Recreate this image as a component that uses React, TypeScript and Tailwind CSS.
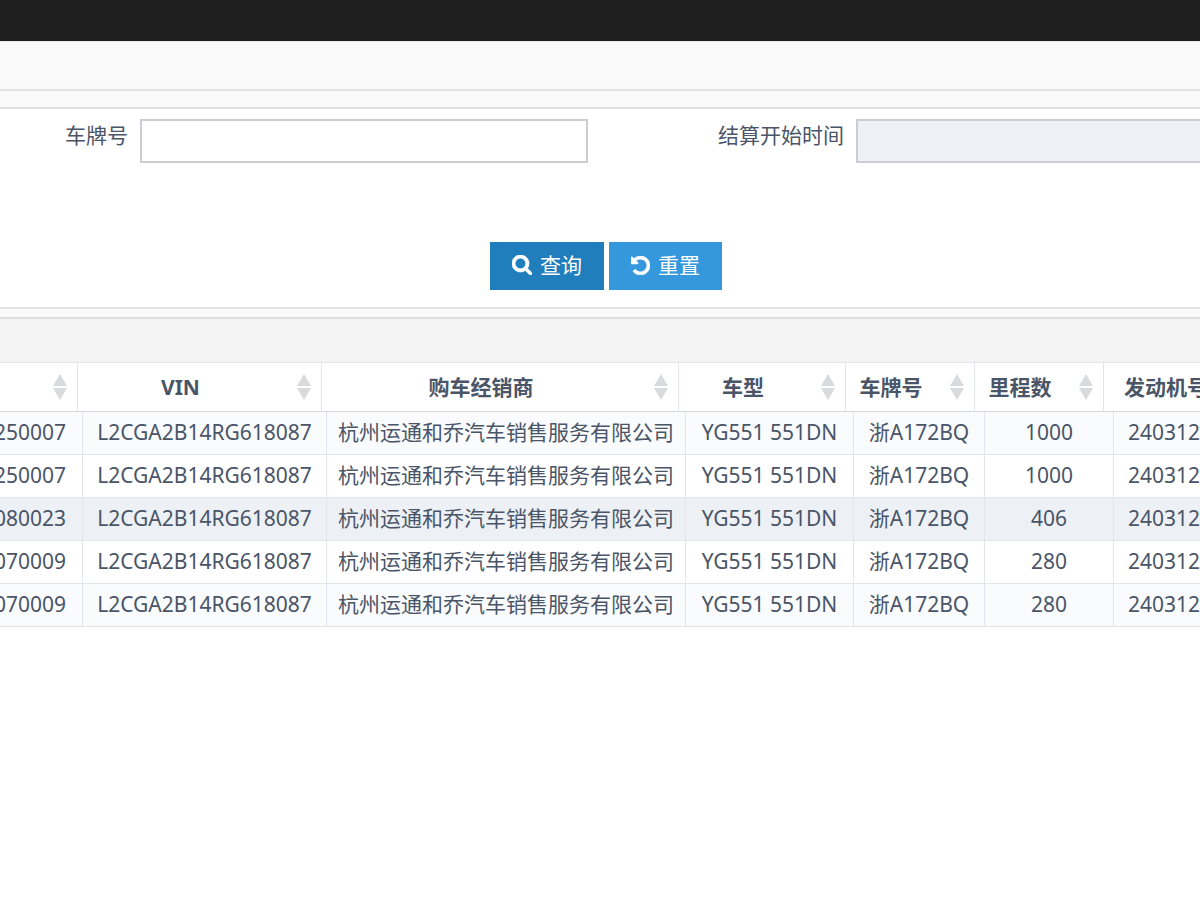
const columns = [
  { title: "", head: "w-[78px]", body: "w-[83px]" },
  { title: "VIN", head: "w-[244px]", body: "w-[244px]" },
  { title: "购车经销商", head: "w-[357px]", body: "w-[359px]" },
  { title: "车型", head: "w-[167px]", body: "w-[168px]" },
  { title: "车牌号", head: "w-[129px]", body: "w-[131px]" },
  { title: "里程数", head: "w-[129px]", body: "w-[129px]" },
  { title: "发动机号", head: "", body: "" },
];

const rows = [
  { order: "250007", mileage: "1000", tone: "bg-[#f9fbfd]" },
  { order: "250007", mileage: "1000", tone: "bg-white" },
  { order: "080023", mileage: "406", tone: "bg-[#edf0f5]" },
  { order: "070009", mileage: "280", tone: "bg-white" },
  { order: "070009", mileage: "280", tone: "bg-[#f9fbfd]" },
];

function SortIcon() {
  return (
    <svg viewBox="0 0 14 26" className="h-[26px] w-3.5 shrink-0 fill-[#d9dadc]" aria-hidden="true">
      <path d="M7 0 14 12H0zM0 14h14L7 26z" />
    </svg>
  );
}

function SearchIcon() {
  return (
    <svg viewBox="0 0 1664 1664" className="size-5 fill-current" aria-hidden="true">
      <path d="M1152 704q0-185-131.5-316.5t-316.5-131.5-316.5 131.5-131.5 316.5 131.5 316.5 316.5 131.5 316.5-131.5 131.5-316.5zm512 832q0 52-38 90t-90 38q-54 0-90-38l-343-342q-179 124-399 124-143 0-273.5-55.5t-225-150-150-225-55.5-273.5 55.5-273.5 150-225 225-150 273.5-55.5 273.5 55.5 225 150 150 225 55.5 273.5q0 220-124 399l343 343q37 37 37 90z" strokeWidth="70" className="stroke-current" />
    </svg>
  );
}

function UndoIcon() {
  return (
    <svg viewBox="0 128 1536 1536" className="size-[19px] fill-current" aria-hidden="true">
      <path d="M1536 896q0 156-61 298t-164 245-245 164-298 61q-172 0-327-72.5t-264-204.5q-7-10-6.5-22.5t8.5-20.5l137-138q10-9 25-9 16 2 23 12 73 95 179 147t225 52q104 0 198.5-40.5t163.5-109.5 109.5-163.5 40.5-198.5-40.5-198.5-109.5-163.5-163.5-109.5-198.5-40.5q-98 0-188 35.5t-160 101.5l137 138q31 30 14 69-17 40-59 40h-448q-26 0-45-19t-19-45v-448q0-42 40-59 39-17 69 14l130 129q107-101 244.5-156.5t284.5-55.5q156 0 298 61t245 164 164 245 61 298z" strokeWidth="50" className="stroke-current" />
    </svg>
  );
}

const cell = "overflow-hidden whitespace-nowrap border-r border-b border-[#e2e6ec] p-0 pb-0.5";

export default function App() {
  return (
    <div className="min-h-screen overflow-hidden bg-white font-['Noto_Sans','Noto_Sans_CJK_SC',sans-serif] text-[21px] leading-7 text-[#4a5567]">
      <header className="h-[41px] bg-[#1f1f1f]" />
      <div className="h-[50px] border-t border-b-2 border-t-[#e8e8e8] border-b-[#e2e2e2] bg-[#fafafa]" />
      <div className="h-[18px] border-b-2 border-[#dedede] bg-[#fafafa]" />

      <form className="border-b-2 border-[#e2e2e2] pt-2.5 pb-[17px]" onSubmit={(e) => e.preventDefault()}>
        <div className="flex">
          <div className="flex w-[49%] items-start gap-3">
            <label htmlFor="plate" className="w-32 pt-0.5 text-right">车牌号</label>
            <input id="plate" type="text" className="h-11 min-w-0 flex-1 border-2 border-[#cccdd2] bg-white px-3 outline-none" />
          </div>
          <div className="flex flex-1 items-start gap-3">
            <label htmlFor="start" className="w-64 pt-0.5 text-right">结算开始时间</label>
            <input id="start" type="text" readOnly className="h-11 min-w-0 flex-1 border-2 border-r-0 border-[#cccdd2] bg-[#edf0f5] px-3 outline-none" />
          </div>
        </div>
        <div className="mt-[79px] flex justify-center gap-[5px] pl-3 text-white">
          <button type="submit" className="flex h-12 items-center gap-2 bg-[#217ebd] px-[22px] pb-0.5">
            <SearchIcon />
            查询
          </button>
          <button type="reset" className="flex h-12 items-center gap-2 bg-[#3598dc] px-[22px] pb-0.5">
            <UndoIcon />
            重置
          </button>
        </div>
      </form>

      <div className="h-2.5 border-b-2 border-[#dedede] bg-[#fafafa]" />
      <div className="h-11 border-b border-[#e4e6ea] bg-[#f4f4f4]" />

      <table className="w-full table-fixed border-separate border-spacing-0">
        <thead>
          <tr className="h-[49px]">
            {columns.map((c, i) => (
              <th
                key={i}
                scope="col"
                className={`${c.head} overflow-hidden whitespace-nowrap border-r border-b border-r-[#e2e6ec] border-b-[#d5d8dd] p-0 font-bold last:border-r-0`}
              >
                {i === columns.length - 1 ? (
                  <div className="pl-5 text-left">{c.title}</div>
                ) : (
                  <div className="flex items-center gap-3.5 pr-2.5">
                    <span className="flex-1">{c.title}</span>
                    <SortIcon />
                  </div>
                )}
              </th>
            ))}
          </tr>
        </thead>
      </table>
      <table className="w-full table-fixed border-separate border-spacing-0 text-center">
        <colgroup>
          {columns.map((c, i) => (
            <col key={i} className={c.body} />
          ))}
        </colgroup>
        <tbody>
          {rows.map((r, i) => (
            <tr key={i} className={`h-[43px] ${r.tone}`}>
              <td className={cell}>
                <div className="flex justify-end overflow-hidden pr-4">{r.order}</div>
              </td>
              <td className={cell}>L2CGA2B14RG618087</td>
              <td className={cell}>杭州运通和乔汽车销售服务有限公司</td>
              <td className={cell}>YG551 551DN</td>
              <td className={cell}>浙A172BQ</td>
              <td className={cell}>{r.mileage}</td>
              <td className={`${cell} border-r-0`}>
                <div className="pl-3.5 text-left">240312</div>
              </td>
            </tr>
          ))}
        </tbody>
      </table>
    </div>
  );
}
